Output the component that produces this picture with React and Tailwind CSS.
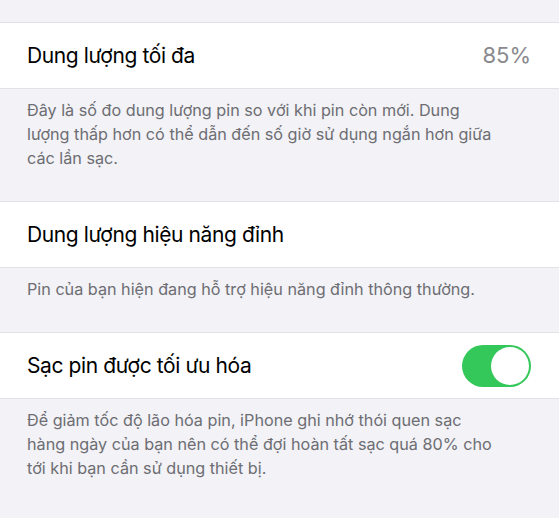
export default function App() {
  const font = { fontFamily: 'Inter, "Noto Sans", sans-serif' };
  return (
    <div className="w-[559px] h-[518px] overflow-hidden bg-[#f2f2f7]" style={font}>
      <div className="h-[22px]" />

      <Row title="Dung lượng tối đa" value="85%" />
      <Footer>
        Đây là số đo dung lượng pin so với khi pin còn mới. Dung lượng thấp hơn có thể dẫn đến số giờ sử dụng ngắn hơn giữa các lần sạc.
      </Footer>

      <Row title="Dung lượng hiệu năng đỉnh" />
      <Footer>Pin của bạn hiện đang hỗ trợ hiệu năng đỉnh thông thường.</Footer>

      <Row title="Sạc pin được tối ưu hóa" toggle />
      <Footer>
        Để giảm tốc độ lão hóa pin, iPhone ghi nhớ thói quen sạc hàng ngày của bạn nên có thể đợi hoàn tất sạc quá 80% cho tới khi bạn cần sử dụng thiết bị.
      </Footer>
    </div>
  );
}

function Row({ title, value, toggle }) {
  return (
    <div className="flex h-[67px] items-center justify-between border-y border-[#e1e1e6] bg-white pl-[27px] pr-[28px]">
      <span className="text-[21px] text-black tracking-[-0.4px]">{title}</span>
      {value && <span className="text-[22px] text-[#8a8a8e]">{value}</span>}
      {toggle && (
        <div className="flex h-[42px] w-[69px] items-center justify-end rounded-full bg-[#34c759] p-[2px]">
          <div className="h-[38px] w-[38px] rounded-full bg-white" />
        </div>
      )}
    </div>
  );
}

function Footer({ children }) {
  return (
    <div className="pl-[27px] pr-[62px] pt-[9px] pb-[31px] text-[16.2px] leading-[24px] text-[#6d6d72]">
      {children}
    </div>
  );
}
